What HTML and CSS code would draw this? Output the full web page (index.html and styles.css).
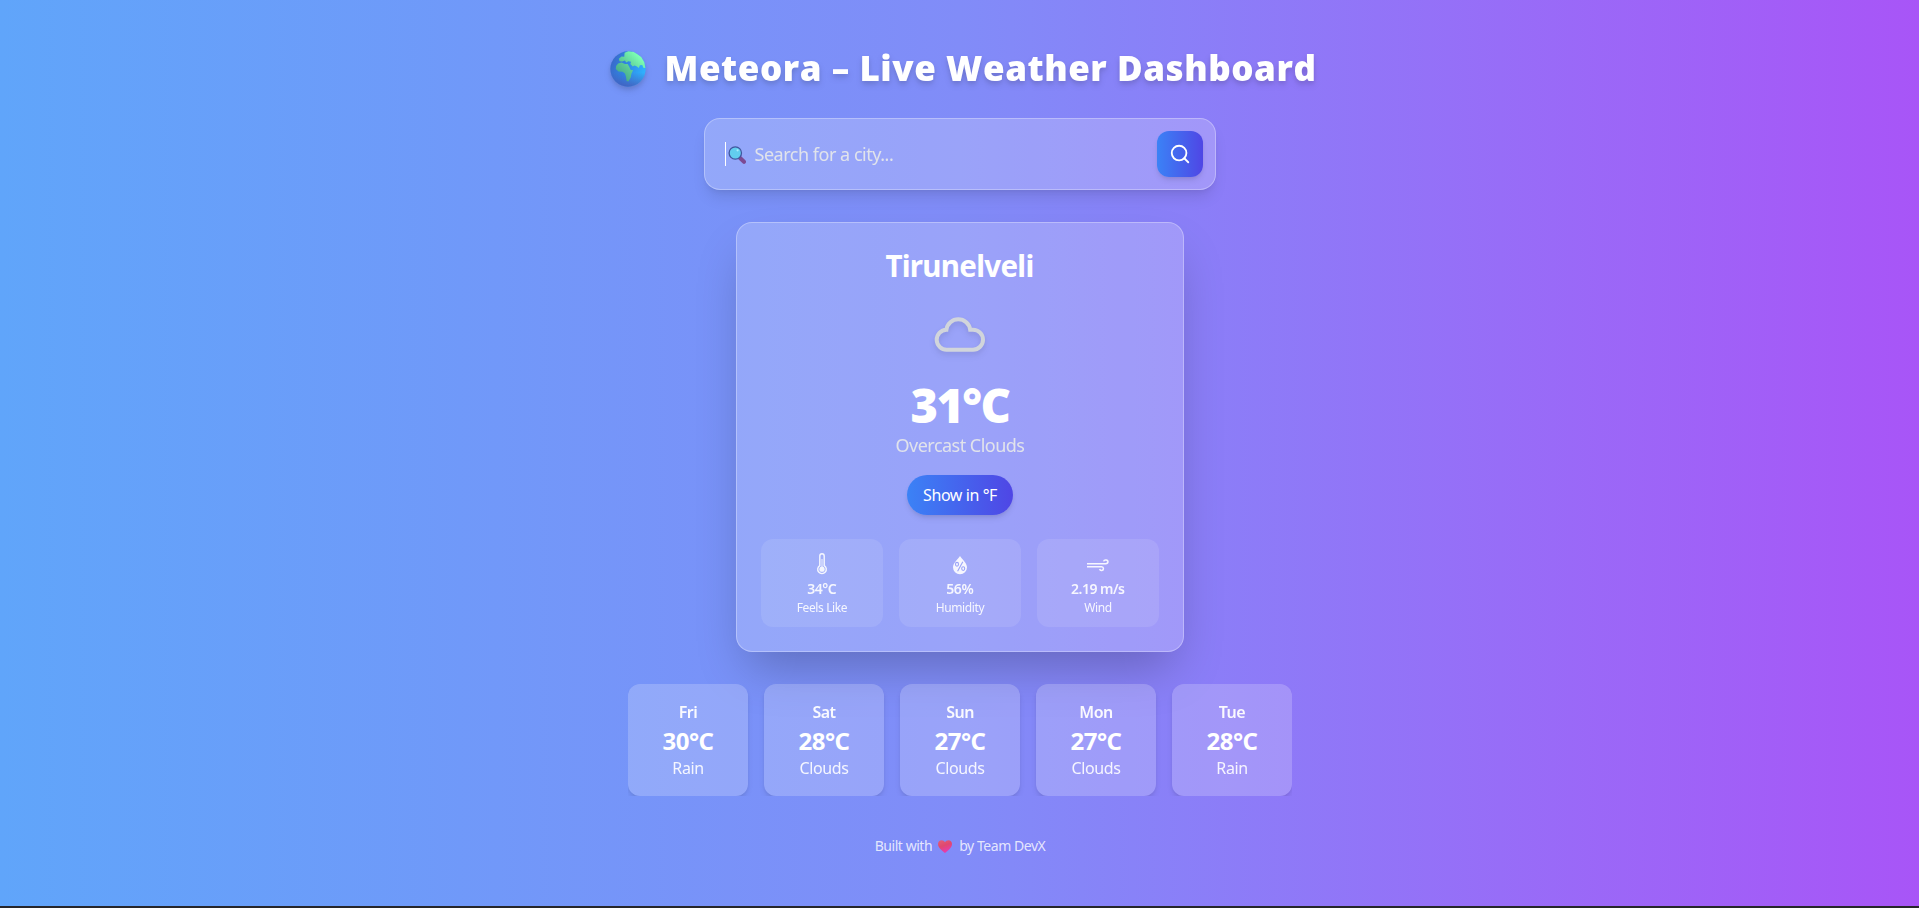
FILE: index.html
```html
<!DOCTYPE html>
<html lang="en">
<head>
<meta charset="utf-8">
<title>Meteora – Live Weather Dashboard</title>
<link rel="stylesheet" href="styles.css">
</head>
<body>
<main class="page">
  <h1 class="title">
    <svg class="globe" viewBox="0 0 106 106" aria-hidden="true">
      <defs>
        <linearGradient id="sea" x1="0" y1="0.3" x2="1" y2="0.6"><stop offset="0" stop-color="#3a68c8"/><stop offset="0.45" stop-color="#2f86e4"/><stop offset="1" stop-color="#2fb4ff"/></linearGradient>
        <linearGradient id="rim" x1="0.5" y1="0" x2="0.5" y2="1"><stop offset="0.6" stop-color="#4a4fb0" stop-opacity="0"/><stop offset="1" stop-color="#4a4fb0" stop-opacity="0.7"/></linearGradient>
        <linearGradient id="land" gradientUnits="userSpaceOnUse" x1="20" y1="80" x2="85" y2="15"><stop offset="0" stop-color="#3f9f86"/><stop offset="0.55" stop-color="#5fcf98"/><stop offset="1" stop-color="#7dffb4"/></linearGradient>
      </defs>
      <circle cx="53" cy="53" r="52" fill="url(#sea)"/>
      <circle cx="53" cy="53" r="52" fill="url(#rim)"/>
      <path fill="url(#land)" d="M28 30 26 23 34 16 42 17 43 5 54 1 70 3 82 10 92 18 101 33 104 50 98 49 95 41 88 42 85 50 78 45 72 43 67 46 60 38 62 32 54 30 48 34 44 28 36 31Z"/>
      <path fill="url(#land)" d="M18 44 24 37 34 34 44 38 52 38 57 47 61 56 68 57 63 67 61 78 54 90 49 88 47 75 44 66 37 61 25 60 17 53Z"/>
    </svg>
    <span>Meteora – Live Weather Dashboard</span>
  </h1>

  <form class="search">
    <div class="search-field">
      <i class="caret"></i>
      <svg class="lens" viewBox="0 0 18 18" aria-hidden="true">
        <path d="M11.8 11.8 16 15.8" stroke="#7c4a93" stroke-width="4" stroke-linecap="round"/>
        <circle cx="7.3" cy="7" r="6.2" fill="#62cdee" stroke="#41569f" stroke-width="1.3"/>
        <circle cx="9.6" cy="4.3" r="1.1" fill="#a9ecfb"/>
      </svg>
      <span class="placeholder">Search for a city...</span>
    </div>
    <button class="search-btn" type="button" aria-label="Search">
      <svg viewBox="0 0 24 24" fill="none" stroke="#fff" stroke-width="2" stroke-linecap="round"><circle cx="11" cy="11" r="8"/><path d="m21 21-4.35-4.35"/></svg>
    </button>
  </form>

  <section class="card">
    <h2 class="city">Tirunelveli</h2>
    <svg class="cloud" viewBox="0 0 64 64" fill="none" stroke="#d1d5db" stroke-width="4"><path d="M18.4 30.7A12 12 0 0 1 42.2 30.7H45A10 10 0 0 1 45 50.7H19A10 10 0 0 1 18.4 30.7Z"/></svg>
    <p class="temp">31°C</p>
    <p class="desc">Overcast Clouds</p>
    <button class="unit" type="button">Show in °F</button>
    <div class="stats">
      <div class="stat">
        <svg viewBox="0 0 24 24" fill="none" stroke="#fff" stroke-width="1.4"><path d="M9.8 14.6V4.9a2.200 2.200 0 0 1 4.400 0v9.700a4.300 4.300 0 1 1-4.400 0Z"/><path d="M12 8v9" stroke-width="1.600" opacity=".6"/><circle cx="12" cy="18.200" r="2.600" fill="#fff" stroke="none"/></svg>
        <b>34°C</b><span>Feels Like</span>
      </div>
      <div class="stat">
        <svg viewBox="0 0 24 24"><path fill="#fff" d="M12 5c1.400 2.700 7 6.900 7 11.300a7 6.900 0 0 1-14 0C5 11.900 10.600 7.700 12 5Z"/><g fill="none" stroke="#9aa3fa" stroke-width="1.100"><ellipse cx="9" cy="13.300" rx="1.500" ry="1.900"/><ellipse cx="15.200" cy="17.600" rx="1.500" ry="1.900"/><path d="m14.800 10.800-5.200 9.500"/></g></svg>
        <b>56%</b><span>Humidity</span>
      </div>
      <div class="stat">
        <svg viewBox="0 0 24 24" fill="none" stroke="#fff" stroke-width="1.500"><path d="M1 12.700h18.800a2.200 1.900 0 1 0-2.200-2.300"/><path d="M1 15.700h14.600a1.900 1.900 0 1 1-1.900 2.300"/></svg>
        <b>2.19 m/s</b><span>Wind</span>
      </div>
    </div>
  </section>

  <section class="forecast">
    <div class="day"><b>Fri</b><strong>30°C</strong><span>Rain</span></div>
    <div class="day"><b>Sat</b><strong>28°C</strong><span>Clouds</span></div>
    <div class="day"><b>Sun</b><strong>27°C</strong><span>Clouds</span></div>
    <div class="day"><b>Mon</b><strong>27°C</strong><span>Clouds</span></div>
    <div class="day"><b>Tue</b><strong>28°C</strong><span>Rain</span></div>
  </section>

  <footer class="footer">
    <span>Built with</span>
    <svg viewBox="0 0 14 13" aria-hidden="true"><defs><linearGradient id="heart" x1="0" y1="0" x2="0.4" y2="1"><stop offset="0" stop-color="#e2607a"/><stop offset="0.5" stop-color="#e0486f"/><stop offset="1" stop-color="#e63bb0"/></linearGradient></defs><path fill="url(#heart)" d="M7 13C4.500 11 0 8 0 4 0 1.500 1.600.2 3.500.2 5.200.2 6.400 1 7 2.300 7.600 1 8.800.2 10.500.2 12.400.2 14 1.500 14 4c0 4-4.500 7-7 9Z"/></svg>
    <span>by Team DevX</span>
  </footer>
</main>
</body>
</html>
```
FILE: styles.css
```css
* { box-sizing: border-box; margin: 0; padding: 0; }

body {
  background: #26262b;
  color: #fff;
  font-family: "Noto Sans", "Open Sans", sans-serif;
  overflow: hidden;
}

button { border: 0; color: inherit; font-family: inherit; }
svg { display: block; }

.page {
  height: 906px;
  padding-top: 46px;
  display: flex;
  flex-direction: column;
  align-items: center;
  background: linear-gradient(to right, #60a5fa, #818cf8, #a855f7);
}

.title {
  display: flex;
  align-items: center;
  gap: 19px;
  height: 40px;
  padding-left: 7px;
  margin-bottom: 32px;
  font: 800 35px/40px "Open Sans", sans-serif;
  letter-spacing: .55px;
  white-space: nowrap;
  filter: drop-shadow(0 4px 3px rgba(0, 0, 0, .1)) drop-shadow(0 2px 2px rgba(0, 0, 0, .08));
}
.title span { padding-top: 3px; }
.globe { width: 36px; height: 36px; margin-top: 5px; }

.search {
  display: flex;
  align-items: center;
  justify-content: space-between;
  width: 512px;
  height: 72px;
  padding: 12px 12px 12px 20px;
  margin-bottom: 32px;
  border: 1px solid rgba(255, 255, 255, .3);
  border-radius: 16px;
  background: rgba(255, 255, 255, .2);
  box-shadow: 0 10px 15px -3px rgba(0, 0, 0, .1), 0 4px 6px -4px rgba(0, 0, 0, .1);
}
.search-field { display: flex; align-items: center; }
.caret { width: 1px; height: 24px; background: #fff; }
.lens { width: 18px; height: 18px; margin: 1px 9px 0 2px; }
.placeholder { color: #e5e7eb; opacity: .95; font-size: 18px; line-height: 28px; letter-spacing: -.48px; }
.search-btn {
  display: grid;
  place-items: center;
  width: 46px;
  height: 46px;
  border-radius: 12px;
  background: linear-gradient(to right, #3b82f6, #4f46e5);
  box-shadow: 0 4px 6px -1px rgba(0, 0, 0, .1), 0 2px 4px -2px rgba(0, 0, 0, .1);
}
.search-btn svg { width: 22px; height: 22px; }

.card {
  display: flex;
  flex-direction: column;
  align-items: center;
  width: 448px;
  padding: 24px;
  margin-bottom: 32px;
  border: 1px solid rgba(255, 255, 255, .3);
  border-radius: 16px;
  background: rgba(255, 255, 255, .2);
  box-shadow: 0 25px 50px -12px rgba(0, 0, 0, .25);
}
.city { height: 36px; padding-top: 1px; font-size: 29.5px; line-height: 36px; font-weight: 700; letter-spacing: -.7px; }
.cloud {
  width: 64px;
  height: 64px;
  margin: 16px 0 18px;
  filter: drop-shadow(0 4px 3px rgba(0, 0, 0, .07)) drop-shadow(0 2px 2px rgba(0, 0, 0, .06));
}
.temp { padding-left: 1px; font: 800 47px/48px "Open Sans", sans-serif; letter-spacing: -1.6px; }
.desc { margin: 2px 0 16px; padding-left: 1px; color: #e5e7eb; opacity: .95; font-size: 18px; line-height: 28px; letter-spacing: -.52px; }
.unit {
  height: 40px;
  width: 106px;
  padding-left: 1px;
  margin-bottom: 24px;
  border-radius: 20px;
  background: linear-gradient(to right, #3b82f6, #4f46e5);
  box-shadow: 0 4px 6px -1px rgba(0, 0, 0, .1), 0 2px 4px -2px rgba(0, 0, 0, .1);
  font-size: 16px;
  line-height: 24px;
  letter-spacing: -.42px;
}
.stats { display: grid; grid-template-columns: repeat(3, 122px); gap: 16px; }
.stat {
  display: flex;
  flex-direction: column;
  align-items: center;
  height: 88px;
  padding: 12px 12px 11px;
  border-radius: 12px;
  background: rgba(255, 255, 255, .1);
}
.stat > * { flex-shrink: 0; opacity: .9; }
.stat svg { width: 24px; height: 24px; margin-bottom: 4px; }
.stat b { font-size: 14px; line-height: 20px; font-weight: 600; letter-spacing: -.5px; padding-left: .5px; }
.stat span { font-size: 12px; line-height: 16px; letter-spacing: -.38px; padding: 1px 0 0 1px; }

.forecast { display: flex; gap: 16px; overflow: hidden; }
.day {
  display: flex;
  flex-direction: column;
  align-items: center;
  width: 120px;
  height: 112px;
  padding: 16px;
  border-radius: 12px;
  background: rgba(255, 255, 255, .2);
  box-shadow: 0 4px 6px -1px rgba(0, 0, 0, .1), 0 2px 4px -2px rgba(0, 0, 0, .1);
}
.day b { font-size: 16px; line-height: 24px; font-weight: 600; letter-spacing: -.5px; padding-left: 1px; opacity: .95; }
.day strong { height: 32px; padding: 1px 0 0 1px; font-size: 24px; line-height: 32px; font-weight: 700; letter-spacing: -.5px; }
.day span { font-size: 16px; line-height: 24px; letter-spacing: -.42px; padding-left: 1px; opacity: .9; }

.footer {
  display: flex;
  align-items: center;
  gap: 7px;
  margin-top: 40px;
  padding-left: 1px;
  font-size: 14px;
  line-height: 20px;
  letter-spacing: -.45px;
  color: rgba(255, 255, 255, .8);
}
.footer svg { width: 14px; height: 13px; margin: 1px 0 0 -1px; }
```
